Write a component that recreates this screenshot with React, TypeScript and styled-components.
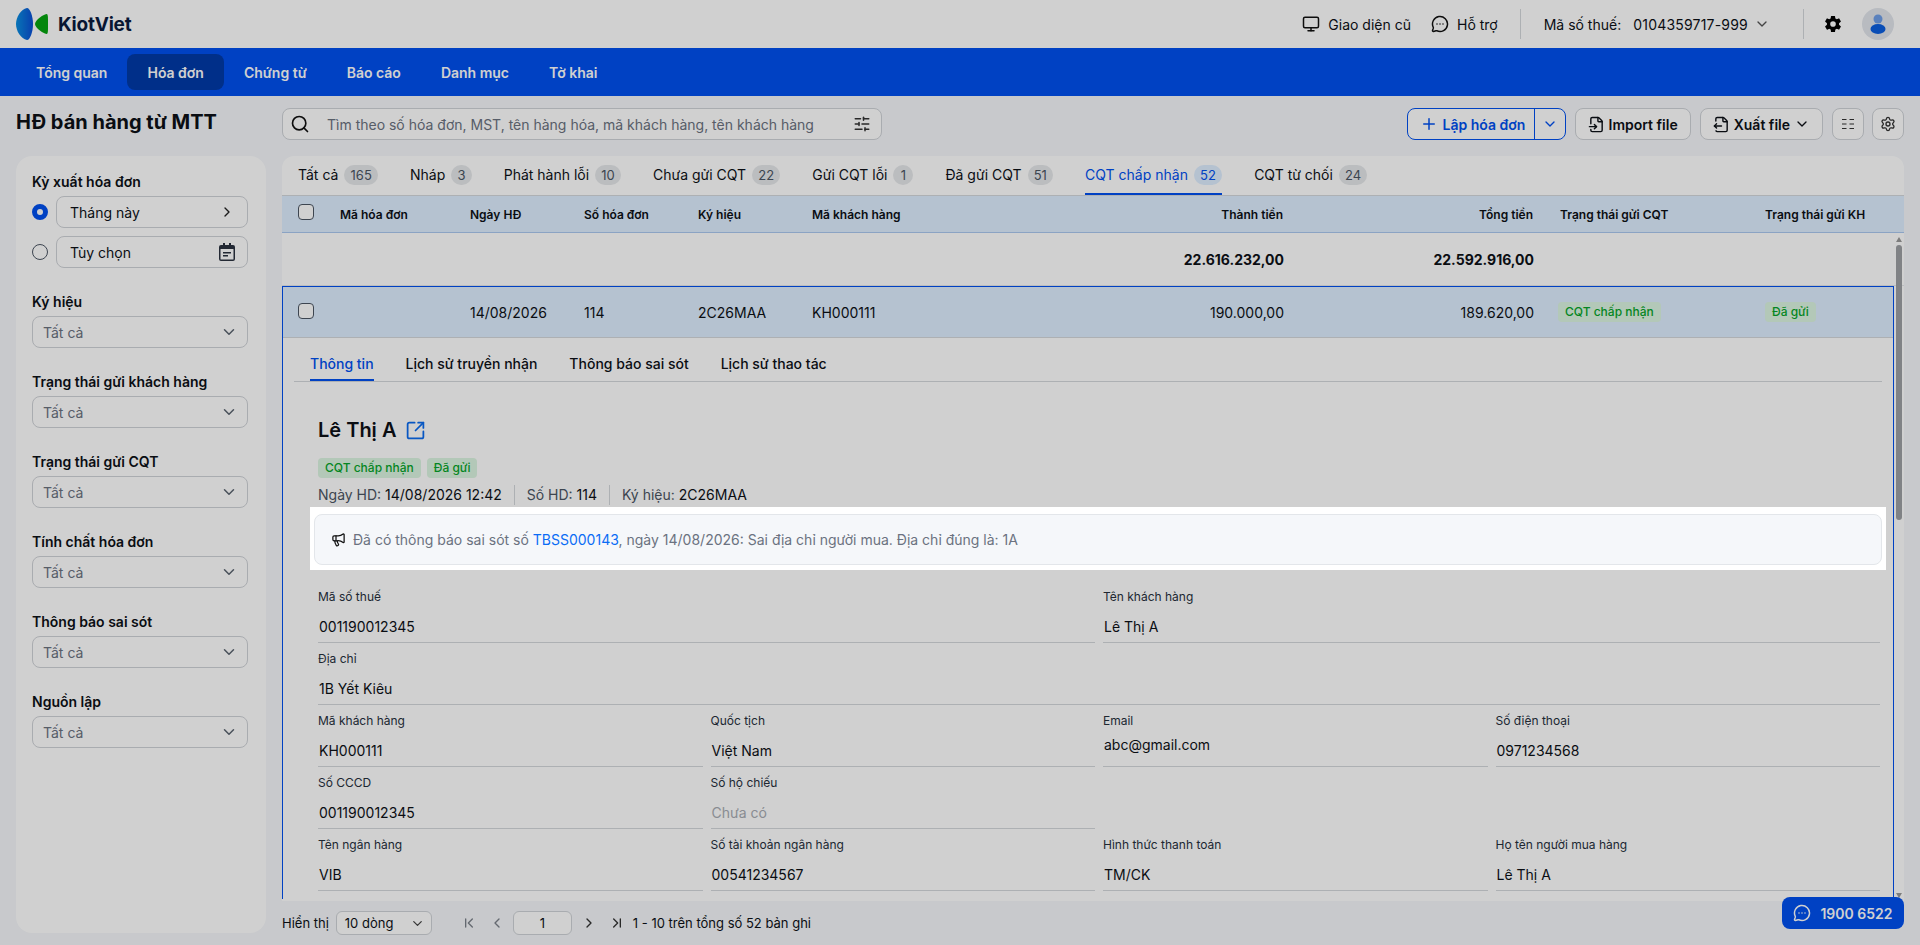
import { styled, createGlobalStyle } from 'styled-components';
import {
  ChevronDown,
  ChevronFirst,
  ChevronLast,
  ChevronLeft,
  ChevronRight,
  FileInput,
  FileOutput,
  Megaphone,
  MessageCircleMore,
  Monitor,
  Plus,
  Search,
  Settings,
  SlidersHorizontal,
  SquareArrowOutUpRight,
} from 'lucide-react';
import { IoSettingsSharp } from 'react-icons/io5';

const navItems = ['Tổng quan', 'Hóa đơn', 'Chứng từ', 'Báo cáo', 'Danh mục', 'Tờ khai'];

const statusTabs = [
  { name: 'Tất cả', count: 165 },
  { name: 'Nháp', count: 3 },
  { name: 'Phát hành lỗi', count: 10 },
  { name: 'Chưa gửi CQT', count: 22 },
  { name: 'Gửi CQT lỗi', count: 1 },
  { name: 'Đã gửi CQT', count: 51 },
  { name: 'CQT chấp nhận', count: 52 },
  { name: 'CQT từ chối', count: 24 },
];

const filters = [
  'Ký hiệu',
  'Trạng thái gửi khách hàng',
  'Trạng thái gửi CQT',
  'Tính chất hóa đơn',
  'Thông báo sai sót',
  'Nguồn lập',
];

const detailTabs = ['Thông tin', 'Lịch sử truyền nhận', 'Thông báo sai sót', 'Lịch sử thao tác'];

const fields = [
  { label: 'Mã số thuế', value: '001190012345', span: 2 },
  { label: 'Tên khách hàng', value: 'Lê Thị A', span: 2 },
  { label: 'Địa chỉ', value: '1B Yết Kiêu', span: 4 },
  { label: 'Mã khách hàng', value: 'KH000111', span: 1 },
  { label: 'Quốc tịch', value: 'Việt Nam', span: 1 },
  { label: 'Email', value: 'abc@gmail.com', span: 1, raised: true },
  { label: 'Số điện thoại', value: '0971234568', span: 1 },
  { label: 'Số CCCD', value: '001190012345', span: 1 },
  { label: 'Số hộ chiếu', value: 'Chưa có', span: 1, empty: true },
  { label: '', value: '', span: 2, blank: true },
  { label: 'Tên ngân hàng', value: 'VIB', span: 1 },
  { label: 'Số tài khoản ngân hàng', value: '00541234567', span: 1 },
  { label: 'Hình thức thanh toán', value: 'TM/CK', span: 1 },
  { label: 'Họ tên người mua hàng', value: 'Lê Thị A', span: 1 },
];

function CalendarIcon() {
  return (
    <svg width="16" height="18" viewBox="0 0 16 18">
      <path d="M4 0h2v2h4V0h2v2h2a2 2 0 0 1 2 2v12a2 2 0 0 1-2 2H2a2 2 0 0 1-2-2V4a2 2 0 0 1 2-2h2z" fill="#2b3340" />
      <rect x="1.5" y="6" width="13" height="10.5" rx="0.5" fill="#fff" />
      <path d="M4 9h8v1.4H4zM4 12h5v1.4H4z" fill="#2b3340" />
    </svg>
  );
}

export default function App() {
  return (
    <>
      <GlobalStyle />
      <TopBar>
        <Logo>
          <svg width="33" height="32" viewBox="0 0 33 32">
            <defs>
              <linearGradient id="kv" x1="0" y1="0" x2="1" y2="0">
                <stop offset="0" stopColor="#0a8fe0" />
                <stop offset="1" stopColor="#0a4fd6" />
              </linearGradient>
            </defs>
            <path d="M11 0C5 1 0 9 0 16c0 7 5 15 11 16 3 0 6-8 6-16S14 0 11 0z" fill="url(#kv)" />
            <path d="M31 6c-3 0-12 6-12 10s9 10 12 10c1-1 1-3 1-10s0-9-1-10z" fill="#05a50f" />
          </svg>
          <LogoText>KiotViet</LogoText>
        </Logo>
        <TopActions>
          <TopLink $space={20}>
            <Monitor size={18} color="#111" />
            Giao diện cũ
          </TopLink>
          <TopLink $space={22}>
            <MessageCircleMore size={18} color="#111" />
            Hỗ trợ
          </TopLink>
          <TopDivider $space={23} />
          <TaxCode>
            <span>Mã số thuế:</span>
            <TaxValue>0104359717-999</TaxValue>
            <TaxArrow>
              <ChevronDown size={16} color="#555" />
            </TaxArrow>
          </TaxCode>
          <TopDivider $space={20} />
          <IoSettingsSharp size={18} color="#000" />
          <Avatar>
            <svg width="16" height="20" viewBox="0 0 16 20">
              <circle cx="8" cy="5" r="4.5" fill="#6f9fe8" />
              <ellipse cx="8" cy="15" rx="7.5" ry="5" fill="#0c5fe0" />
            </svg>
          </Avatar>
        </TopActions>
      </TopBar>

      <NavBar>
        {navItems.map((item) => (
          <NavItem key={item} $active={item === 'Hóa đơn'}>
            {item}
          </NavItem>
        ))}
      </NavBar>

      <Page>
        <SideColumn>
          <PageTitle>HĐ bán hàng từ MTT</PageTitle>
          <FilterPanel>
            <FilterLabel>Kỳ xuất hóa đơn</FilterLabel>
            <PeriodRow>
              <Radio $checked />
              <PeriodBox>
                Tháng này
                <ChevronRight size={16} color="#222" />
              </PeriodBox>
            </PeriodRow>
            <PeriodRow>
              <Radio />
              <PeriodBox>
                Tùy chọn
                <CalendarIcon />
              </PeriodBox>
            </PeriodRow>
            {filters.map((name) => (
              <FilterGroup key={name}>
                <FilterLabel>{name}</FilterLabel>
                <SelectBox>
                  Tất cả
                  <ChevronDown size={18} color="#5b6470" />
                </SelectBox>
              </FilterGroup>
            ))}
          </FilterPanel>
        </SideColumn>

        <MainColumn>
          <Toolbar>
            <SearchBox>
              <Search size={20} color="#111" />
              <SearchText>Tìm theo số hóa đơn, MST, tên hàng hóa, mã khách hàng, tên khách hàng</SearchText>
              <SlidersHorizontal size={18} color="#333" />
            </SearchBox>
            <ToolActions>
              <SplitButton>
                <SplitMain>
                  <Plus size={18} />
                  Lập hóa đơn
                </SplitMain>
                <SplitArrow>
                  <ChevronDown size={16} />
                </SplitArrow>
              </SplitButton>
              <ToolButton>
                <FileInput size={17} />
                Import file
              </ToolButton>
              <ToolButton>
                <FileOutput size={17} />
                Xuất file
                <ChevronDown size={16} />
              </ToolButton>
              <IconButton>
                <svg width="14" height="12" viewBox="0 0 14 12" fill="none" stroke="#333" strokeWidth="1.2">
                  <path d="M1 1.5h4.5M8.5 1.5H13M1 6h4.5M8.5 6H13M1 10.5h4.5M8.5 10.5H13" />
                </svg>
              </IconButton>
              <IconButton>
                <Settings size={16} color="#333" />
              </IconButton>
            </ToolActions>
          </Toolbar>

          <TablePanel>
            <StatusTabs>
              {statusTabs.map((tab) => {
                const active = tab.name === 'CQT chấp nhận';
                return (
                  <StatusTab key={tab.name} $active={active}>
                    {tab.name}
                    <Count $active={active}>{tab.count}</Count>
                  </StatusTab>
                );
              })}
            </StatusTabs>

            <HeaderRow>
              <Checkbox />
              <span>Mã hóa đơn</span>
              <span>Ngày HĐ</span>
              <span>Số hóa đơn</span>
              <span>Ký hiệu</span>
              <span>Mã khách hàng</span>
              <AmountHead>Thành tiền</AmountHead>
              <AmountHead>Tổng tiền</AmountHead>
              <StatusHead>Trạng thái gửi CQT</StatusHead>
              <span>Trạng thái gửi KH</span>
            </HeaderRow>

            <TableBody>
              <TotalRow>
                <TotalCell>22.616.232,00</TotalCell>
                <TotalCell>22.592.916,00</TotalCell>
              </TotalRow>

              <ExpandedRow>
                <SelectedRow>
                  <Checkbox />
                  <span />
                  <span>14/08/2026</span>
                  <span>114</span>
                  <span>2C26MAA</span>
                  <span>KH000111</span>
                  <AmountCell>190.000,00</AmountCell>
                  <AmountCell>189.620,00</AmountCell>
                  <StatusCell>
                    <Chip>CQT chấp nhận</Chip>
                  </StatusCell>
                  <span>
                    <Chip>Đã gửi</Chip>
                  </span>
                </SelectedRow>

                <DetailTabs>
                  {detailTabs.map((tab, i) => (
                    <DetailTab key={tab} $active={i === 0}>
                      {tab}
                    </DetailTab>
                  ))}
                </DetailTabs>

                <DetailBody>
                  <NameRow>
                    Lê Thị A
                    <SquareArrowOutUpRight size={21} color="#0b6bef" />
                  </NameRow>
                  <ChipRow>
                    <Chip>CQT chấp nhận</Chip>
                    <Chip>Đã gửi</Chip>
                  </ChipRow>
                  <MetaRow>
                    <MetaItem>
                      <MetaLabel>Ngày HD:</MetaLabel> 14/08/2026 12:42
                    </MetaItem>
                    <MetaItem>
                      <MetaLabel>Số HD:</MetaLabel> 114
                    </MetaItem>
                    <MetaItem>
                      <MetaLabel>Ký hiệu:</MetaLabel> 2C26MAA
                    </MetaItem>
                  </MetaRow>

                  <Spotlight>
                    <NoticeCard>
                      <Megaphone size={15} color="#111" />
                      <NoticeText>
                        Đã có thông báo sai sót số <NoticeLink>TBSS000143</NoticeLink>, ngày 14/08/2026: Sai địa chỉ
                        người mua. Địa chỉ đúng là: 1A
                      </NoticeText>
                    </NoticeCard>
                  </Spotlight>

                  <FieldGrid>
                    {fields.map((f, i) =>
                      f.blank ? (
                        <BlankField key={i} $span={f.span} />
                      ) : (
                        <Field key={i} $span={f.span}>
                          <FieldLabel>{f.label}</FieldLabel>
                          <FieldValue $empty={f.empty} $raised={f.raised}>
                            {f.value}
                          </FieldValue>
                        </Field>
                      ),
                    )}
                  </FieldGrid>
                </DetailBody>
              </ExpandedRow>

              <ScrollTrack>
                <ScrollArrow />
                <ScrollThumb />
                <ScrollArrow $down />
              </ScrollTrack>
            </TableBody>
          </TablePanel>

          <Pager>
            <PagerText>Hiển thị</PagerText>
            <PageSize>
              10 dòng
              <ChevronDown size={15} color="#444" />
            </PageSize>
            <PagerIcons>
              <ChevronFirst size={16} color="#7b818a" />
              <ChevronLeft size={16} color="#7b818a" />
              <PageInput>1</PageInput>
              <ChevronRight size={16} color="#333" />
              <ChevronLast size={16} color="#333" />
            </PagerIcons>
            <PagerText>1 - 10 trên tổng số 52 bản ghi</PagerText>
          </Pager>
        </MainColumn>
      </Page>

      <ChatButton>
        <MessageCircleMore size={18} />
        1900 6522
      </ChatButton>
    </>
  );
}

const GlobalStyle = createGlobalStyle`
  html, body {
    margin: 0;
    height: 100%;
    overflow: hidden;
    background: #f5f7fa;
    font-family: Inter, "Noto Sans", sans-serif;
    color: #0d1117;
  }
  * {
    box-sizing: border-box;
  }
`;

const TopBar = styled.header`
  height: 48px;
  background: #fff;
  display: flex;
  align-items: center;
  justify-content: space-between;
  padding: 0 26px 0 16px;
`;

const Logo = styled.div`
  display: flex;
  align-items: center;
  gap: 9px;
`;

const LogoText = styled.span`
  font-size: 19px;
  font-weight: 700;
  color: #0b1b3f;
  letter-spacing: -0.2px;
`;

const TopActions = styled.div`
  display: flex;
  align-items: center;
  font-size: 14px;
`;

const TopLink = styled.div<{ $space: number }>`
  display: flex;
  align-items: center;
  gap: 8px;
  margin-right: ${(p) => p.$space}px;
`;

const TopDivider = styled.div<{ $space: number }>`
  width: 1px;
  height: 30px;
  background: #d5d8dc;
  margin-right: ${(p) => p.$space}px;
`;

const TaxCode = styled.div`
  display: flex;
  align-items: center;
  gap: 12px;
  margin-right: 33px;
`;

const TaxValue = styled.span`
  letter-spacing: 0.2px;
`;

const TaxArrow = styled.span`
  display: flex;
  margin-left: -6px;
`;

const Avatar = styled.div`
  width: 32px;
  height: 32px;
  border-radius: 50%;
  background: #e2e6ec;
  margin-left: 20px;
  display: flex;
  align-items: center;
  justify-content: center;
`;

const NavBar = styled.nav`
  height: 48px;
  background: #0050f0;
  display: flex;
  align-items: center;
  padding-left: 16px;
`;

const NavItem = styled.div<{ $active?: boolean }>`
  height: 36px;
  padding: 0 20px;
  display: flex;
  align-items: center;
  color: #fff;
  font-size: 14px;
  font-weight: 600;
  border-radius: 8px;
  background: ${(p) => (p.$active ? '#003aa8' : 'transparent')};
`;

const Page = styled.div`
  height: calc(100vh - 96px);
  display: flex;
  gap: 16px;
  padding: 12px 16px 0;
`;

const SideColumn = styled.aside`
  width: 250px;
  flex: none;
  display: flex;
  flex-direction: column;
  padding-bottom: 12px;
`;

const PageTitle = styled.h1`
  margin: 0 0 16px;
  height: 32px;
  line-height: 28px;
  font-size: 20px;
  font-weight: 700;
  white-space: nowrap;
`;

const FilterPanel = styled.div`
  flex: 1;
  background: #fff;
  border-radius: 16px;
  padding: 16px 18px 16px 16px;
`;

const FilterLabel = styled.div`
  height: 20px;
  line-height: 20px;
  font-size: 14px;
  font-weight: 600;
  margin-bottom: 4px;
`;

const FilterGroup = styled.div`
  margin-top: 24px;
`;

const PeriodRow = styled.div`
  display: flex;
  align-items: center;
  gap: 8px;

  & + & {
    margin-top: 8px;
  }
`;

const Radio = styled.div<{ $checked?: boolean }>`
  width: 16px;
  height: 16px;
  border-radius: 50%;
  flex: none;
  background: #fff;
  border: ${(p) => (p.$checked ? '5px solid #0050f0' : '1px solid #4b5563')};
`;

const PeriodBox = styled.div`
  flex: 1;
  height: 32px;
  border: 1px solid #d0d3d8;
  border-radius: 8px;
  padding: 0 12px 0 13px;
  display: flex;
  align-items: center;
  justify-content: space-between;
  font-size: 14px;
`;

const SelectBox = styled.div`
  height: 32px;
  border: 1px solid #d0d3d8;
  border-radius: 8px;
  padding: 0 9px 0 10px;
  display: flex;
  align-items: center;
  justify-content: space-between;
  font-size: 14px;
  color: #6b7280;
`;

const MainColumn = styled.main`
  flex: 1;
  min-width: 0;
  display: flex;
  flex-direction: column;
`;

const Toolbar = styled.div`
  height: 32px;
  margin-bottom: 16px;
  display: flex;
  justify-content: space-between;
`;

const SearchBox = styled.div`
  width: 600px;
  height: 32px;
  background: #fff;
  border: 1px solid #d0d3d8;
  border-radius: 8px;
  display: flex;
  align-items: center;
  padding: 0 10px 0 7px;
`;

const SearchText = styled.span`
  flex: 1;
  padding-left: 17px;
  font-size: 14px;
  color: #6b7280;
  white-space: nowrap;
`;

const ToolActions = styled.div`
  display: flex;
  gap: 9px;

  & > :last-child {
    margin-left: -1px;
  }
`;

const SplitButton = styled.div`
  width: 159px;
  display: flex;
  background: #fff;
  border: 1px solid #0050f0;
  border-radius: 8px;
  color: #0050f0;
`;

const SplitMain = styled.div`
  flex: 1;
  display: flex;
  align-items: center;
  gap: 5px;
  padding-left: 12px;
  font-size: 14px;
  font-weight: 600;
  border-right: 1px solid #0050f0;
`;

const SplitArrow = styled.div`
  width: 30px;
  display: flex;
  align-items: center;
  justify-content: center;
`;

const ToolButton = styled.div`
  display: flex;
  align-items: center;
  gap: 4px;
  padding: 0 12px;
  background: #fff;
  border: 1px solid #d0d3d8;
  border-radius: 8px;
  font-size: 14px;
  font-weight: 600;
  white-space: nowrap;
`;

const IconButton = styled.div`
  width: 32px;
  display: flex;
  align-items: center;
  justify-content: center;
  background: #fff;
  border: 1px solid #d0d3d8;
  border-radius: 8px;
`;

const TablePanel = styled.section`
  flex: 1;
  min-height: 0;
  display: flex;
  flex-direction: column;
  background: #fff;
  border-radius: 12px 12px 0 0;
`;

const StatusTabs = styled.div`
  height: 40px;
  flex: none;
  display: flex;
  gap: 32px;
  padding-left: 16px;
  border-bottom: 1px solid #d5d8dc;
`;

const StatusTab = styled.div<{ $active?: boolean }>`
  display: flex;
  align-items: center;
  gap: 6px;
  font-size: 14px;
  white-space: nowrap;
  color: ${(p) => (p.$active ? '#0050f0' : 'inherit')};
  border-bottom: 2px solid ${(p) => (p.$active ? '#0050f0' : 'transparent')};
`;

const Count = styled.span<{ $active?: boolean }>`
  height: 20px;
  min-width: 20px;
  padding: 0 6.2px;
  border-radius: 10px;
  font-size: 13px;
  line-height: 20px;
  text-align: center;
  color: ${(p) => (p.$active ? '#0050f0' : '#4b5563')};
  background: ${(p) => (p.$active ? '#deeeff' : '#e6e8eb')};
`;

const columns = '42px 130px 114px 114px 114px 200px 272px 250px 231px 1fr';

const HeaderRow = styled.div`
  height: 37px;
  flex: none;
  display: grid;
  grid-template-columns: ${columns};
  align-items: center;
  padding-left: 16px;
  background: #deeeff;
  border-bottom: 1px solid #abc8ef;
  font-size: 12px;
  font-weight: 600;
`;

const AmountHead = styled.span`
  text-align: right;
  padding-right: 1px;
`;

const StatusHead = styled.span`
  padding-left: 26px;
`;

const Checkbox = styled.div`
  width: 16px;
  height: 16px;
  background: #fff;
  border: 1px solid #4b5563;
  border-radius: 4px;
  margin-top: -4px;
`;

const TableBody = styled.div`
  flex: 1;
  min-height: 0;
  display: flex;
  flex-direction: column;
  position: relative;
`;

const TotalRow = styled.div`
  height: 53px;
  flex: none;
  display: grid;
  grid-template-columns: 770px 250px;
  justify-content: start;
  align-items: center;
  padding: 0 0 0 232px;
  font-size: 14px;
  font-weight: 700;
  border-bottom: 1px solid #e6e8eb;
`;

const TotalCell = styled.span`
  text-align: right;
`;

const ExpandedRow = styled.div`
  flex: 1;
  min-height: 0;
  margin: 0 10px 2px 0;
  border: 1px solid #0050f0;
  border-bottom: none;
`;

const SelectedRow = styled.div`
  height: 51px;
  display: grid;
  grid-template-columns: ${columns};
  align-items: center;
  padding-left: 15px;
  background: #deeeff;
  border-bottom: 1px solid #d5d8dc;
  font-size: 14px;

  ${Checkbox} {
    margin-top: -2px;
  }
`;

const AmountCell = styled.span`
  text-align: right;
`;

const StatusCell = styled.span`
  padding-left: 24px;
`;

const Chip = styled.span`
  display: inline-block;
  height: 20px;
  line-height: 20px;
  padding: 0 7px;
  border-radius: 4px;
  font-size: 12px;
  font-weight: 500;
  color: #06a52a;
  background: #dcf5e2;
  white-space: nowrap;
`;

const DetailTabs = styled.div`
  height: 44px;
  margin: 0 11px;
  padding-left: 16px;
  display: flex;
  gap: 32px;
  border-bottom: 1px solid #d5d8dc;
`;

const DetailTab = styled.div<{ $active?: boolean }>`
  display: flex;
  align-items: center;
  padding-top: 9px;
  font-size: 14px;
  font-weight: 500;
  white-space: nowrap;
  color: ${(p) => (p.$active ? '#0050f0' : 'inherit')};
  border-bottom: 2px solid ${(p) => (p.$active ? '#0050f0' : 'transparent')};
`;

const DetailBody = styled.div`
  padding: 34px 13px 0 35px;
`;

const NameRow = styled.div`
  height: 28px;
  display: flex;
  align-items: center;
  gap: 9px;
  font-size: 20px;
  font-weight: 600;
`;

const ChipRow = styled.div`
  margin-top: 14px;
  display: flex;
  gap: 6px;
`;

const MetaRow = styled.div`
  margin-top: 7px;
  display: flex;
  font-size: 14px;
`;

const MetaItem = styled.div`
  height: 20px;
  line-height: 20px;
  padding-right: 12px;
  margin-right: 12px;
  border-right: 1px solid #d5d8dc;

  &:last-child {
    border-right: none;
  }
`;

const MetaLabel = styled.span`
  color: #4b5563;
`;

const Spotlight = styled.div`
  position: relative;
  z-index: 1000;
  margin: 2px -6px 0 -8px;
  padding: 7px 4px 5px;
  background: #fff;
  box-shadow: 0 0 0 3000px rgba(0, 0, 0, 0.185);
`;

const NoticeCard = styled.div`
  height: 51px;
  display: flex;
  align-items: center;
  gap: 7px;
  padding: 0 16px;
  background: #f5f7fa;
  border: 1px solid #e3e6ea;
  border-radius: 8px;
`;

const NoticeText = styled.span`
  font-size: 14px;
  color: #6b7280;
`;

const NoticeLink = styled.span`
  color: #0a6cf5;
`;

const FieldGrid = styled.div`
  margin-top: 19px;
  display: grid;
  grid-template-columns: repeat(4, 1fr);
  column-gap: 8px;
  row-gap: 8px;
`;

const Field = styled.div<{ $span: number }>`
  grid-column: span ${(p) => p.$span};
`;

const BlankField = styled.div<{ $span: number }>`
  grid-column: span ${(p) => p.$span};
`;

const FieldLabel = styled.div`
  height: 16px;
  line-height: 16px;
  font-size: 12px;
  color: #27303d;
`;

const FieldValue = styled.div<{ $empty?: boolean; $raised?: boolean }>`
  height: 38px;
  line-height: 20px;
  padding: ${(p) => (p.$raised ? '6px' : '12px')} 0 0 1px;
  font-size: 14px;
  color: ${(p) => (p.$empty ? '#a8acb3' : 'inherit')};
  border-bottom: 1px solid #d5d8dc;
`;

const ScrollTrack = styled.div`
  position: absolute;
  top: 0;
  right: 0;
  bottom: 0;
  width: 10px;
  display: flex;
  flex-direction: column;
  align-items: center;
`;

const ScrollArrow = styled.div<{ $down?: boolean }>`
  width: 0;
  height: 0;
  margin: 4px 0 3px;
  border-left: 3px solid transparent;
  border-right: 3px solid transparent;
  ${(p) => (p.$down ? 'border-top: 5px solid #9a9a9a; margin-top: auto;' : 'border-bottom: 5px solid #9a9a9a;')}
`;

const ScrollThumb = styled.div`
  width: 6px;
  height: 275px;
  border-radius: 3px;
  background: #9ea0a4;
`;

const Pager = styled.div`
  height: 44px;
  flex: none;
  display: flex;
  align-items: center;
  font-size: 13px;
`;

const PagerText = styled.span`
  white-space: nowrap;
`;

const PageSize = styled.div`
  width: 96px;
  height: 24px;
  margin-left: 7px;
  padding: 0 6px 0 8px;
  border: 1px solid #d0d3d8;
  border-radius: 6px;
  background: #fff;
  display: flex;
  align-items: center;
  justify-content: space-between;
`;

const PagerIcons = styled.div`
  display: flex;
  align-items: center;
  gap: 12px;
  margin: 0 8px 0 29px;
`;

const PageInput = styled.div`
  width: 59px;
  height: 24px;
  margin: 0 -3px 0 -4px;
  border: 1px solid #d0d3d8;
  border-radius: 6px;
  background: #fff;
  display: flex;
  align-items: center;
  justify-content: center;
`;

const ChatButton = styled.div`
  position: fixed;
  right: 16px;
  bottom: 16px;
  width: 122px;
  height: 32px;
  z-index: 100;
  display: flex;
  align-items: center;
  justify-content: center;
  gap: 9px;
  border-radius: 8px;
  background: #0050f0;
  color: #fff;
  font-size: 14px;
  font-weight: 600;
`;
